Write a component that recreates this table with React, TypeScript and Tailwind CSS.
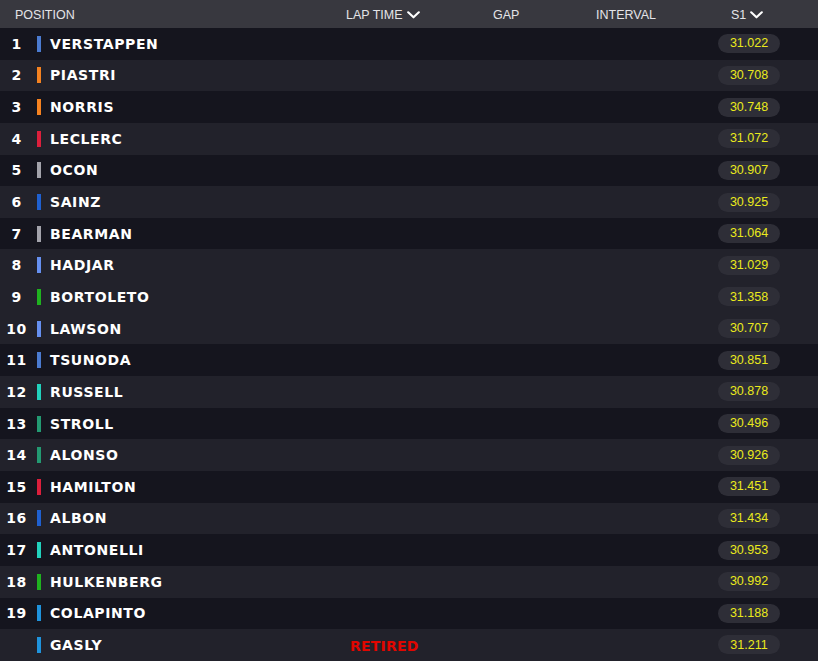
import React from "react";

type Driver = { pos: string; name: string; color: string; s1: string; retired?: boolean; light: boolean };

const raw: [string, string, string, string][] = [
  ["1", "VERSTAPPEN", "#4b7bd0", "31.022"],
  ["2", "PIASTRI", "#f58220", "30.708"],
  ["3", "NORRIS", "#f58220", "30.748"],
  ["4", "LECLERC", "#dc1f3c", "31.072"],
  ["5", "OCON", "#a3a3ab", "30.907"],
  ["6", "SAINZ", "#1f60d0", "30.925"],
  ["7", "BEARMAN", "#a3a3ab", "31.064"],
  ["8", "HADJAR", "#6690f0", "31.029"],
  ["9", "BORTOLETO", "#1fb21f", "31.358"],
  ["10", "LAWSON", "#6690f0", "30.707"],
  ["11", "TSUNODA", "#4b7bd0", "30.851"],
  ["12", "RUSSELL", "#22d1bc", "30.878"],
  ["13", "STROLL", "#239a72", "30.496"],
  ["14", "ALONSO", "#239a72", "30.926"],
  ["15", "HAMILTON", "#dc1f3c", "31.451"],
  ["16", "ALBON", "#1f60d0", "31.434"],
  ["17", "ANTONELLI", "#22d1bc", "30.953"],
  ["18", "HULKENBERG", "#1fb21f", "30.992"],
  ["19", "COLAPINTO", "#1f93dc", "31.188"],
  ["", "GASLY", "#1f93dc", "31.211"],
];

const lightRows = new Set([2, 4, 6, 8, 9, 10, 12, 14, 16, 18, 20]);

const drivers: Driver[] = raw.map((r, i) => ({
  pos: r[0],
  name: r[1],
  color: r[2],
  s1: r[3],
  retired: r[1] === "GASLY",
  light: lightRows.has(i + 1),
}));

function Chevron() {
  return (
    <svg width="13" height="8" viewBox="0 0 13 8" className="ml-[4px]">
      <path d="M1.2 1.3 L6.5 6.3 L11.8 1.3" fill="none" stroke="#ffffff" strokeWidth="2.1" strokeLinecap="round" strokeLinejoin="round" />
    </svg>
  );
}

const wide = { fontFamily: '"DejaVu Sans", "Liberation Sans", sans-serif' };
const sans = { fontFamily: '"Liberation Sans", Arial, sans-serif' };

export default function App() {
  return (
    <div className="w-[818px] h-[661px] overflow-hidden bg-[#15151e]">
      <div className="flex h-[28px] items-center bg-[#38383f] text-[12.5px] text-[#e4e4e8] pt-[2px]" style={sans}>
        <div className="w-[346px] pl-[15px]">POSITION</div>
        <div className="w-[147px] flex items-center">LAP TIME<Chevron /></div>
        <div className="w-[103px]">GAP</div>
        <div className="w-[122px]">INTERVAL</div>
        <div className="flex items-center pl-[13px]">S1<Chevron /></div>
      </div>
      {drivers.map((d) => (
        <div
          key={d.name}
          className={`flex h-[31.65px] items-center ${d.light ? "bg-[#22222b]" : "bg-[#15151e]"}`}
        >
          <div className="w-[346px] flex items-center">
            <div className="w-[33px] text-center text-[14px] font-bold text-white tracking-[0.5px] pt-[1px]" style={wide}>
              {d.pos}
            </div>
            <div className="ml-[4px] w-[4px] h-[16px]" style={{ backgroundColor: d.color }} />
            <div className="ml-[9px] text-[14px] font-bold text-white tracking-[0.6px] pt-[1px]" style={wide}>
              {d.name}
            </div>
          </div>
          <div className="w-[147px] pl-[4px] pt-[1px]">
            {d.retired && (
              <span className="text-[14px] font-bold text-[#e10600] tracking-[0.2px]" style={wide}>
                RETIRED
              </span>
            )}
          </div>
          <div className="w-[103px]" />
          <div className="w-[122px]" />
          <div className="w-[62px] h-[19px] rounded-full bg-[#2e2e37] flex items-center justify-center text-[12.5px] text-[#eaea1c]" style={sans}>
            {d.s1}
          </div>
        </div>
      ))}
    </div>
  );
}
